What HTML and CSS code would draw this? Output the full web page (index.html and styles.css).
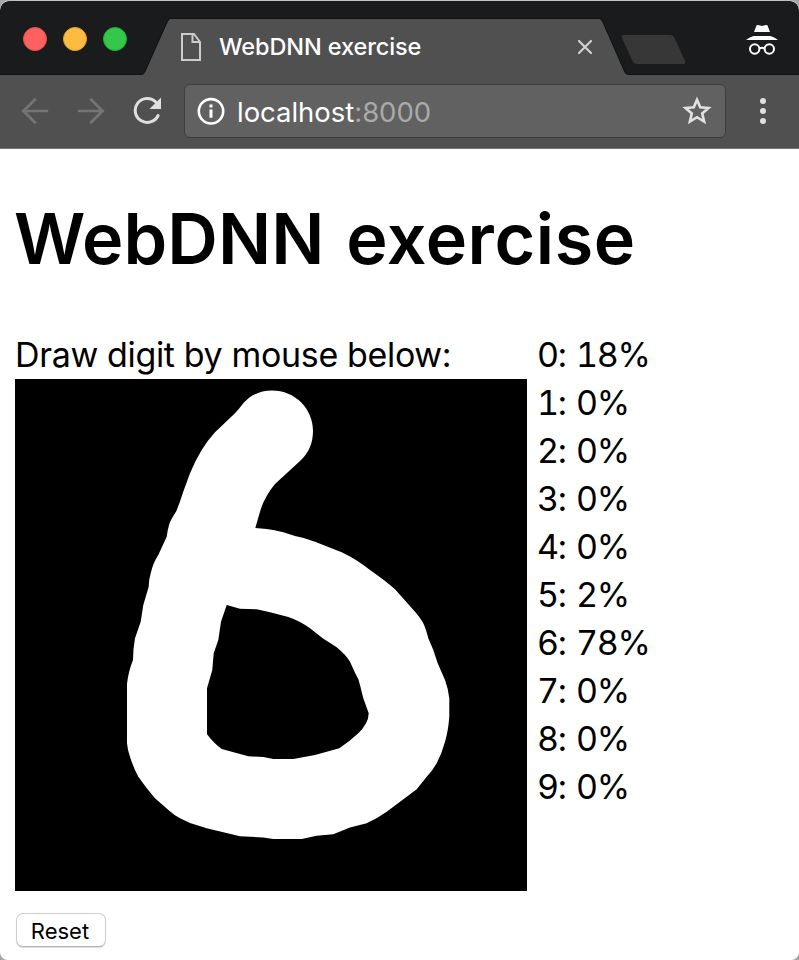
FILE: index.html
```html
<!DOCTYPE html>
<html lang="en">
<head>
<meta charset="utf-8">
<title>WebDNN exercise</title>
<link rel="stylesheet" href="styles.css">
</head>
<body>
<div class="window">
  <header class="tabstrip">
    <svg class="frame" width="799" height="74" viewBox="0 1 799 74">
      <path class="tab-edge" d="M0 74.5H141Q144 74 145 71L167 22Q168.500 18.500 171 18.500H599Q601.500 18.500 603 22L624.500 71Q626 74.500 629 74.500H799"/>
      <path class="tab-fill" d="M141 75Q144 75 145.500 71.500L167.500 22.500Q169 19 171 19H599Q601 19 602.500 22.500L624 71.500Q625.500 75 629 75Z"/>
      <path class="new-tab" d="M624 35H670Q673 35 674.500 38L685 61Q686 64 683 64H637Q634 64 632.500 61L622 38Q621 35 624 35Z"/>
    </svg>
    <div class="lights"><i class="red"></i><i class="yellow"></i><i class="green"></i></div>
    <svg class="page-icon" width="20" height="28" viewBox="0 0 20 28"><path d="M1 1H13L19 9V27H1ZM11.500 1V9H19"/></svg>
    <span class="tab-title">WebDNN exercise</span>
    <svg class="close" width="16" height="16" viewBox="0 0 16 16"><path d="M2 2L14 14M14 2L2 14"/></svg>
    <svg class="incognito" width="32" height="32" viewBox="0 0 32 32">
      <path class="solid" d="M8 8L10.500 1.500Q11 .8 12 1L16 2L20 1Q21 .8 21.500 1.500L24 8ZM0 16Q3 13.500 7.500 12H24.500Q29 13.500 32 16Z"/>
      <circle cx="8.700" cy="25" r="4.700"/><circle cx="23.300" cy="25" r="4.700"/><path d="M13 24.500Q16 23 19 24.500"/>
    </svg>
  </header>
  <nav class="toolbar">
    <svg class="nav dim back" width="28" height="28" viewBox="0 0 28 28"><path d="M26 14H2M14 2.500L2.500 14L14 25.500"/></svg>
    <svg class="nav dim forward" width="28" height="28" viewBox="0 0 28 28"><path d="M2 14H26M14 2.500L25.500 14L14 25.500"/></svg>
    <svg class="nav reload" width="30" height="30" viewBox="0 0 30 30"><path d="M25.100 19.500A12 12 0 1 1 22.800 6"/><path class="head" d="M28 1.500V13H16.500Z"/></svg>
    <div class="address">
      <svg class="info" width="28" height="28" viewBox="0 0 28 28"><circle cx="14" cy="14.300" r="12.200"/><path class="mark" d="M14 12.500V20.800M14 7.500V10.500"/></svg>
      <span class="host">localhost<span class="port">:8000</span></span>
      <svg class="star" width="30" height="29" viewBox="0 0 30 29"><path d="M15 3.700L18.200 11.200L26.500 12L20.200 17.400L22.100 25.500L15 21.200L7.900 25.500L9.800 17.400L3.500 12L11.800 11.200Z"/></svg>
    </div>
    <div class="menu"><i></i><i></i><i></i></div>
  </nav>
  <main>
    <h1>WebDNN <span>exercise</span></h1>
    <div class="exercise">
      <section class="draw">
        <p class="prompt">Draw digit by mouse below:</p>
        <svg class="canvas" width="512" height="512" viewBox="15 379 512 512">
          <path fill-rule="evenodd" d="M272 390.500C260 390.500 250 395.500 243.300 403.300Q239 409 235 413.300L215 432.300Q207.500 440.500 201.700 450Q195 461 190 473.300L182.700 493.300Q179.500 504 176 511.700Q171 519 169.300 524Q167.500 530 166.700 536.700L158.300 555Q153 563 150.700 573.300Q148.700 580 148.700 586.700L143.300 605L140.700 621.700L135 638.300Q133 649 133 660Q128.500 671 127 684V743.300Q127.500 750 130 756.700Q133.500 768 138.300 776.700Q147 789 155 798.300L169 810.500Q175 816 180 818.300L190 823L206.700 828.300L240 836.300L263.300 837.500L273.300 839H301.700L316.700 835.700L333.300 834.300L350 827.500L366.700 823.300Q377 818.500 386.700 811.700L416.700 789.300L426.700 776.700Q432 771.500 436.700 763.300Q442 753 445 741.700Q448.500 730 449.300 716V698.300Q448 688 445 680L437.700 663.300L433.300 650L428.300 638.300Q426 629 423.300 623.300Q420 617 415 611.700L395 589.300Q387 582 370 570Q356 559 341.700 552.300L315 541.700Q306 538 295 536L283.300 532.300Q274 530 266.700 529L255.300 528L260 511.700Q262.500 503 266.700 496Q270 490 275 484L300 461Q313 449 313 431C313 408.500 295 390.500 272 390.500ZM226.700 605L240 608.700L256.700 609.300L270 612.300L288.300 617Q300 621 310 628.300L322.700 638.300L336.700 647.300Q346 655 350 661.700L355 672.700Q359 679 360 685L363.300 698.300L368.700 713.300Q368.500 719 366 723.300Q363 729 358.300 733.300Q349 742 339.300 748.300L315 755L293.300 759H273.300L263.300 757L248.300 756.300L221.700 749Q214 743.500 207 734.300V688.300L212.300 670L213.700 653.300L218.300 640L221 621.700Z"/>
        </svg>
        <button type="button">Reset</button>
      </section>
      <section class="scores">
        <div>0: 18%</div><div>1: 0%</div><div>2: 0%</div><div>3: 0%</div><div>4: 0%</div>
        <div>5: 2%</div><div>6: 78%</div><div>7: 0%</div><div>8: 0%</div><div>9: 0%</div>
      </section>
    </div>
  </main>
</div>
</body>
</html>
```
FILE: styles.css
```css
* { box-sizing: border-box; }
body { margin: 0; background: #a4a7a6; overflow: hidden; }
svg { display: block; flex: none; fill: none; }
.window { width: 799px; height: 960px; padding-top: 1px; border-radius: 10px 10px 8px 8px; overflow: hidden; font-family: Inter, sans-serif; background: linear-gradient(#bfc2c2 1px, #fff 1px); }
.tabstrip { position: relative; display: flex; align-items: center; height: 74px; background: #1a1b1d; border-radius: 9px 9px 0 0; }
.frame { position: absolute; inset: 0; }
.tab-edge { stroke: #111213; }
.tab-fill { fill: #505050; }
.new-tab { fill: #373737; }
.lights { position: relative; display: flex; gap: 16px; margin: 2px 0 0 23px; }
.lights i { width: 24px; height: 24px; border-radius: 50%; border: 1px solid; }
.lights .red { background: #fc615d; border-color: #e6514d; }
.lights .yellow { background: #fdbc40; border-color: #e1a136; }
.lights .green { background: #34c84a; border-color: #24ad36; }
.page-icon { position: relative; align-self: flex-start; margin: 32px 0 0 54px; stroke: #ccc; stroke-width: 2; }
.tab-title { position: relative; width: 203px; margin: 18px 0 0 18px; height: 56px; line-height: 56px; color: #fff; font-size: 23.500px; font-weight: 550; letter-spacing: -.1px; white-space: nowrap; }
.close { position: relative; margin: 18px 0 0 155px; stroke: #d1d1d1; stroke-width: 2.200; stroke-linecap: round; }
.incognito { position: relative; align-self: flex-start; margin: 23px 0 0 153px; stroke: #fff; stroke-width: 2; }
.incognito .solid { fill: #fff; stroke: none; }
.toolbar { display: flex; align-items: center; height: 74px; padding-left: 21px; background: #505050; border-bottom: 1px solid #747474; }
.nav { margin-top: -1px; stroke: #e0e0e0; stroke-width: 3; }
.dim { stroke: #757575; stroke-width: 2.700; stroke-linecap: round; }
.forward { margin-left: 28px; }
.reload { margin-left: 28px; stroke-linecap: round; }
.reload .head { fill: #e0e0e0; stroke: none; }
.address { display: flex; align-items: center; width: 542px; height: 54px; margin: -1px 0 0 21px; padding: 0 13px 0 12px; background: #616161; border: 1px solid #3e3e3e; border-radius: 6px; }
.info { stroke: #fff; stroke-width: 2.600; }
.info .mark { stroke-width: 3; }
.host { margin: 2px 0 0 12px; width: 220px; color: #fff; font-size: 27.500px; letter-spacing: -.03px; white-space: nowrap; }
.port { color: #aaa; }
.star { margin: -1px 0 0 auto; stroke: #e2e2e2; stroke-width: 2.600; }
.menu { display: flex; flex-direction: column; gap: 4px; margin: -1px 0 0 34px; }
.menu i { width: 6px; height: 6px; border-radius: 50%; background: #e0e0e0; }
main { padding: 0 15px; color: #000; }
h1 { margin: 42px 0 0 -1px; height: 96px; line-height: 96px; font-size: 70px; font-weight: 600; letter-spacing: .1px; white-space: nowrap; }
h1 span { margin-left: 4px; letter-spacing: .6px; }
.exercise { display: flex; gap: 11px; margin-top: 44px; }
.draw { width: 512px; }
.prompt { margin: 0; height: 48px; line-height: 48px; font-size: 34px; letter-spacing: -.35px; white-space: nowrap; }
.canvas { background: #000; fill: #fff; }
button { display: block; width: 90px; height: 34px; margin: 22px 0 0 1px; padding: 1px 2px 0 0; border: 1px solid #cdcdcd; border-bottom-color: #b5b5b5; border-radius: 7px; background: #fff; box-shadow: 0 1px 1px #ddd; color: #000; font: 22px Inter, sans-serif; }
.scores { margin-left: -1px; font-size: 34px; line-height: 48px; font-variant-numeric: tabular-nums; letter-spacing: -1.400px; word-spacing: 3px; white-space: nowrap; }
```
